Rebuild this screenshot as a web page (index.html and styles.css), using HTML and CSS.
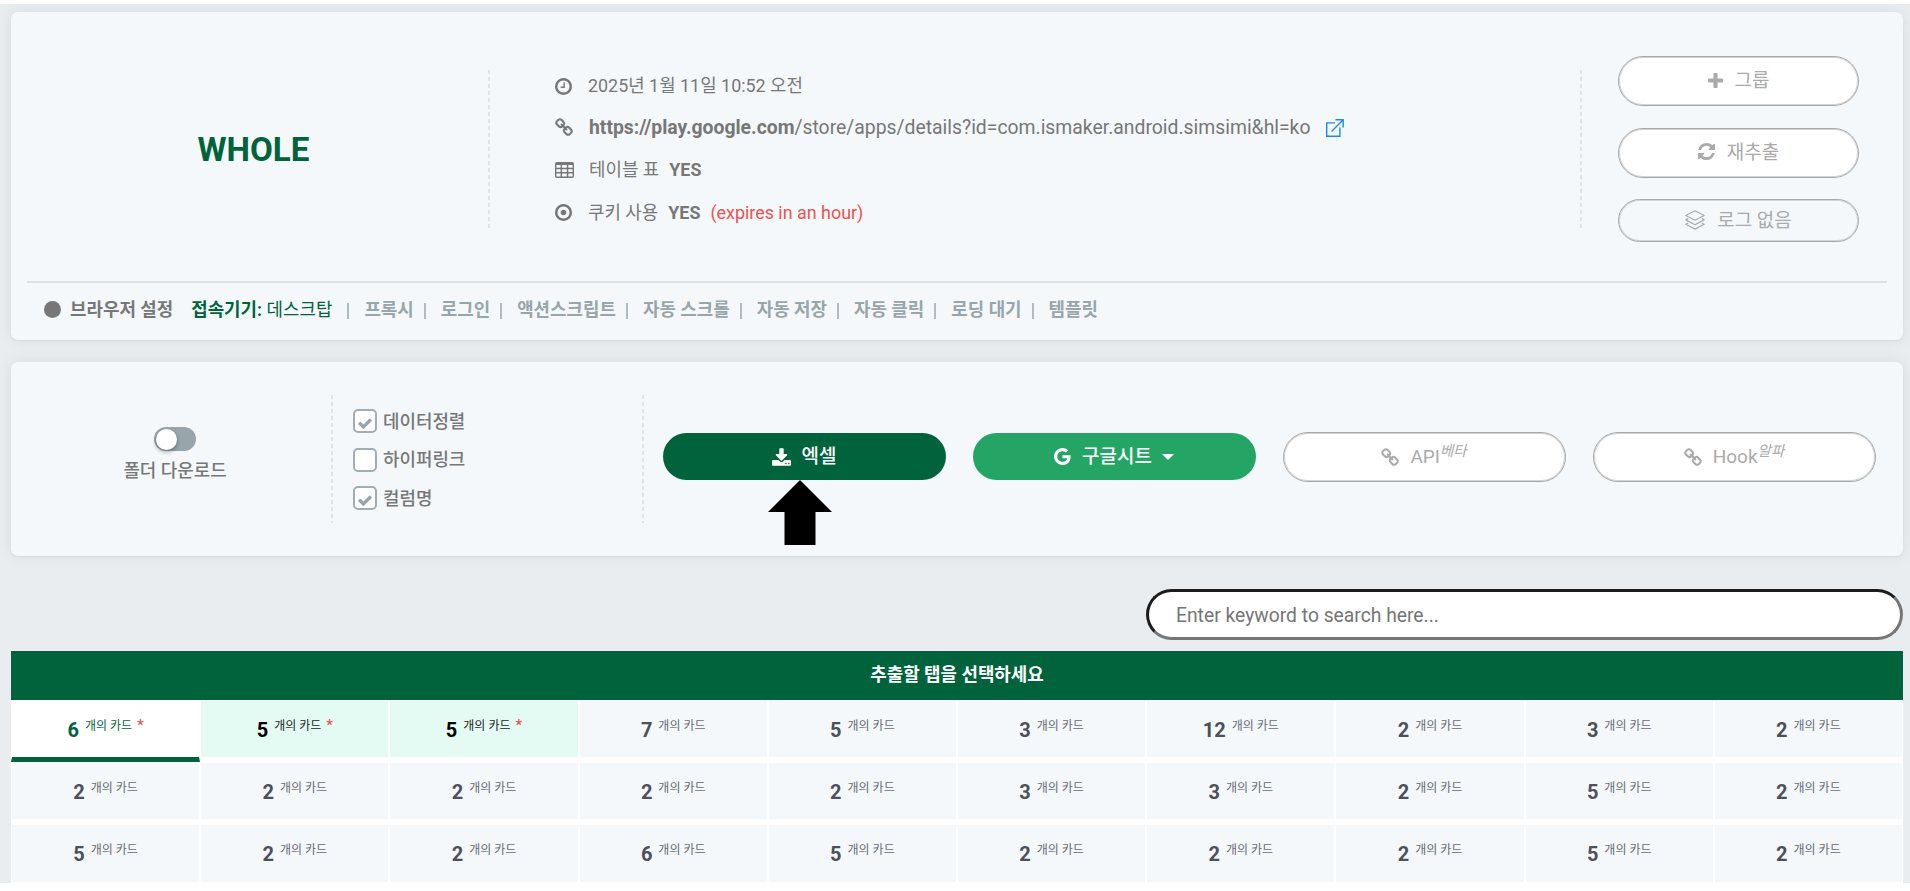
FILE: index.html
```html
<!DOCTYPE html>
<html lang="ko">
<head>
<meta charset="utf-8">
<title>WHOLE</title>
<link rel="stylesheet" href="styles.css">
</head>
<body>
<svg class="defs" width="0" height="0">
  <symbol id="clock" viewBox="128 128 1536 1536"><path d="M1024 544v448q0 14-9 23t-23 9h-320q-14 0-23-9t-9-23v-64q0-14 9-23t23-9h224v-352q0-14 9-23t23-9h64q14 0 23 9t9 23zm416 352q0-148-73-273t-198-198-273-73-273 73-198 198-73 273 73 273 198 198 273 73 273-73 198-198 73-273zm224 0q0 209-103 385.5t-279.5 279.5-385.5 103-385.5-103-279.5-279.5-103-385.5 103-385.5 279.5-279.5 385.5-103 385.5 103 279.5 279.5 103 385.5z"/></symbol>
  <symbol id="chain" viewBox="64 0 1664 1664"><path d="M1520 1216q0-40-28-68l-208-208q-28-28-68-28-42 0-72 32 3 3 19 18.5t21.5 21.5 15 19 13 25.5 3.5 27.5q0 40-28 68t-68 28q-15 0-27.5-3.5t-25.5-13-19-15-21.5-21.5-18.5-19q-33 31-33 73 0 40 28 68l206 207q27 27 68 27 40 0 68-26l147-146q28-28 28-67zm-703-705q0-40-28-68l-206-207q-28-28-68-28-39 0-68 27l-147 146q-28 28-28 67 0 40 28 68l208 208q27 27 68 27 42 0 72-31-3-3-19-18.5t-21.5-21.5-15-19-13-25.5-3.5-27.5q0-40 28-68t68-28q15 0 27.5 3.5t25.5 13 19 15 21.5 21.5 18.5 19q33-31 33-73zm895 705q0 120-85 203l-147 146q-83 83-203 83-121 0-204-85l-206-207q-83-83-83-203 0-123 88-209l-88-88q-86 88-208 88-120 0-204-84l-208-208q-84-84-84-204t85-203l147-146q83-83 203-83 121 0 204 85l206 207q83 83 83 203 0 123-88 209l88 88q86-88 208-88 120 0 204 84l208 208q84 84 84 204z"/></symbol>
  <symbol id="table" viewBox="0 0 19 16"><path fill-rule="evenodd" d="M1.8 0h15.4Q19 0 19 1.8v12.4Q19 16 17.200 16H1.800Q0 16 0 14.200V1.800Q0 0 1.800 0zM1.400 3v2.800h4.200V3zM7 3v2.800h4.800V3zM13.300 3v2.800h4.300V3zM1.400 7.200v2.800h4.200V7.200zM7 7.200v2.800h4.800V7.200zM13.300 7.200v2.800h4.300V7.200zM1.400 11.400v3.100h4.200v-3.100zM7 11.400v3.100h4.800v-3.100zM13.300 11.400v3.100h4.300v-3.100z"/></symbol>
  <symbol id="dot" viewBox="128 128 1536 1536"><path d="M1152 896q0 106-75 181t-181 75-181-75-75-181 75-181 181-75 181 75 75 181zm-256-544q-148 0-273 73t-198 198-73 273 73 273 198 198 273 73 273-73 198-198 73-273-73-273-198-198-273-73zm768 544q0 209-103 385.500t-279.500 279.500-385.500 103-385.500-103-279.500-279.500-103-385.500 103-385.500 279.500-279.500 385.500-103 385.500 103 279.500 279.500 103 385.500z"/></symbol>
  <symbol id="plus" viewBox="192 128 1408 1408"><path d="M1600 736v192q0 40-28 68t-68 28h-416v416q0 40-28 68t-68 28h-192q-40 0-68-28t-28-68v-416h-416q-40 0-68-28t-28-68v-192q0-40 28-68t68-28h416v-416q0-40 28-68t68-28h192q40 0 68 28t28 68v416h416q40 0 68 28t28 68z"/></symbol>
  <symbol id="refresh" viewBox="128 128 1536 1536"><path d="M1639 1056q0 5-1 7-64 268-268 434.500t-478 166.500q-146 0-282.500-55t-243.500-157l-129 129q-19 19-45 19t-45-19-19-45v-448q0-26 19-45t45-19h448q26 0 45 19t19 45-19 45l-137 137q71 66 161 102t187 36q134 0 250-65t186-179q11-17 53-117 8-23 30-23h192q13 0 22.500 9.500t9.500 22.500zm25-800v448q0 26-19 45t-45 19h-448q-26 0-45-19t-19-45 19-45l138-138q-148-137-349-137-134 0-250 65t-186 179q-11 17-53 117-8 23-30 23h-199q-13 0-22.500-9.500t-9.500-22.500v-7q65-268 270-434.500t480-166.500q146 0 284 55.500t245 156.500l130-129q19-19 45-19t45 19 19 45z"/></symbol>
  <symbol id="download" viewBox="64 0 1664 1536"><path d="M1344 1344q0-26-19-45t-45-19-45 19-19 45 19 45 45 19 45-19 19-45zm256 0q0-26-19-45t-45-19-45 19-19 45 19 45 45 19 45-19 19-45zm128-224v320q0 40-28 68t-68 28h-1472q-40 0-68-28t-28-68v-320q0-40 28-68t68-28h465l135 136q58 56 136 56t136-56l136-136h464q40 0 68 28t28 68zm-325-569q17 41-14 70l-448 448q-18 19-45 19t-45-19l-448-448q-31-29-14-70 17-39 59-39h256v-448q0-26 19-45t45-19h256q26 0 45 19t19 45v448h256q42 0 59 39z"/></symbol>
  <symbol id="google" viewBox="128 128 1536 1536"><path d="M896 786h725q12 67 12 128 0 217-91 387.500t-259.500 266.500-386.500 96q-157 0-299-60.500t-245-163.500-163.500-245-60.500-299 60.500-299 163.500-245 245-163.500 299-60.500q300 0 515 201l-209 201q-123-119-306-119-129 0-238.500 65t-173.500 176.500-64 243.500 64 243.500 173.500 176.500 238.500 65q87 0 160-24t120-60 82-82 51.500-87 22.500-78h-436v-264z"/></symbol>
  <symbol id="check" viewBox="121 270 1550 1252"><path d="M1671 566q0 40-28 68l-724 724-136 136q-28 28-68 28t-68-28l-136-136-362-362q-28-28-28-68t28-68l136-136q28-28 68-28t68 28l294 295 656-657q28-28 68-28t68 28l136 136q28 28 28 68z"/></symbol>
  <symbol id="layers" viewBox="0 0 20 20"><path fill="none" stroke="currentColor" stroke-width="1.200" stroke-linejoin="round" d="M10 .8 19.200 5.500 10 10.200.8 5.500zM3.200 8.600.8 9.900 10 14.700l9.200-4.800-2.400-1.300M3.200 13 .8 14.200 10 19.100l9.200-4.900L16.800 13"/></symbol>
  <symbol id="external" viewBox="0 0 18 18"><path fill="none" stroke="currentColor" stroke-width="1.400" d="M9 3.900H.7v13.300h13.200V8.500M9.500.8h7.700v7.700M17 1 5.500 12.500"/></symbol>
</svg>

<main class="page">
  <section class="card summary">
    <div class="summary-top">
      <h1 class="title">WHOLE</h1>
      <div class="dash"></div>
      <ul class="info">
        <li><svg class="i17"><use href="#clock"/></svg><span class="when">2025년 1월 11일 10:52 오전</span></li>
        <li><svg class="i18"><use href="#chain"/></svg><span class="url"><b>https://play.google.com</b>/store/apps/details?id=com.ismaker.android.simsimi&amp;hl=ko</span><svg class="ext"><use href="#external"/></svg></li>
        <li><svg class="itable"><use href="#table"/></svg><span>테이블 표</span><b class="yes">YES</b></li>
        <li><svg class="i17"><use href="#dot"/></svg><span>쿠키 사용</span><b class="yes">YES</b><span class="expires">(expires in an hour)</span></li>
      </ul>
      <div class="dash"></div>
      <div class="actions">
        <button class="pill group"><svg><use href="#plus"/></svg><span>그룹</span></button>
        <button class="pill again"><svg><use href="#refresh"/></svg><span>재추출</span></button>
        <button class="pill log"><svg><use href="#layers"/></svg><span>로그 없음</span></button>
      </div>
    </div>
    <div class="settings">
      <i class="bullet"></i><b class="browser">브라우저 설정</b>
      <span class="device"><b>접속기기:</b> 데스크탑</span>
      <i class="bar first"></i><b>프록시</b>
      <i class="bar"></i><b>로그인</b>
      <i class="bar"></i><b>액션스크립트</b>
      <i class="bar"></i><b>자동 스크롤</b>
      <i class="bar"></i><b>자동 저장</b>
      <i class="bar"></i><b>자동 클릭</b>
      <i class="bar"></i><b>로딩 대기</b>
      <i class="bar"></i><b>템플릿</b>
    </div>
  </section>

  <section class="card export">
    <div class="folder"><span class="toggle"><i></i></span><span class="med">폴더 다운로드</span></div>
    <div class="dash"></div>
    <div class="options">
      <label><span class="box"><svg><use href="#check"/></svg></span><span class="med">데이터정렬</span></label>
      <label><span class="box"></span><span class="med">하이퍼링크</span></label>
      <label><span class="box"><svg><use href="#check"/></svg></span><span class="med">컬럼명</span></label>
    </div>
    <div class="dash"></div>
    <div class="buttons">
      <button class="pill excel"><svg><use href="#download"/></svg><span>엑셀</span>
        <svg class="pointer" viewBox="0 0 64 65"><path d="M32 0 64 32H47.500V65h-31V32H0z"/></svg></button>
      <button class="pill sheet"><svg><use href="#google"/></svg><span>구글시트</span><i class="caret"></i></button>
      <button class="pill hook"><svg><use href="#chain"/></svg><span>API<sup>베타</sup></span></button>
      <button class="pill hook"><svg><use href="#chain"/></svg><span>Hook<sup>알파</sup></span></button>
    </div>
  </section>

  <input class="search" type="text" placeholder="Enter keyword to search here...">

  <section class="tabs">
    <h2>추출할 탭을 선택하세요</h2>
    <div class="grid">
      <div class="cell active"><b>6</b><span>개의 카드</span><em>*</em></div>
      <div class="cell hint"><b>5</b><span>개의 카드</span><em>*</em></div>
      <div class="cell hint"><b>5</b><span>개의 카드</span><em>*</em></div>
      <div class="cell"><b>7</b><span>개의 카드</span></div>
      <div class="cell"><b>5</b><span>개의 카드</span></div>
      <div class="cell"><b>3</b><span>개의 카드</span></div>
      <div class="cell"><b>12</b><span>개의 카드</span></div>
      <div class="cell"><b>2</b><span>개의 카드</span></div>
      <div class="cell"><b>3</b><span>개의 카드</span></div>
      <div class="cell"><b>2</b><span>개의 카드</span></div>
      <div class="cell"><b>2</b><span>개의 카드</span></div>
      <div class="cell"><b>2</b><span>개의 카드</span></div>
      <div class="cell"><b>2</b><span>개의 카드</span></div>
      <div class="cell"><b>2</b><span>개의 카드</span></div>
      <div class="cell"><b>2</b><span>개의 카드</span></div>
      <div class="cell"><b>3</b><span>개의 카드</span></div>
      <div class="cell"><b>3</b><span>개의 카드</span></div>
      <div class="cell"><b>2</b><span>개의 카드</span></div>
      <div class="cell"><b>5</b><span>개의 카드</span></div>
      <div class="cell"><b>2</b><span>개의 카드</span></div>
      <div class="cell"><b>5</b><span>개의 카드</span></div>
      <div class="cell"><b>2</b><span>개의 카드</span></div>
      <div class="cell"><b>2</b><span>개의 카드</span></div>
      <div class="cell"><b>6</b><span>개의 카드</span></div>
      <div class="cell"><b>5</b><span>개의 카드</span></div>
      <div class="cell"><b>2</b><span>개의 카드</span></div>
      <div class="cell"><b>2</b><span>개의 카드</span></div>
      <div class="cell"><b>2</b><span>개의 카드</span></div>
      <div class="cell"><b>5</b><span>개의 카드</span></div>
      <div class="cell"><b>2</b><span>개의 카드</span></div>
    </div>
  </section>
</main>
</body>
</html>
```
FILE: styles.css
```css
* { box-sizing: border-box; }
html, body { margin: 0; background: #fff; }
body {
  height: 891px;
  padding-top: 4px;
  overflow: hidden;
  font-family: Roboto, "Noto Sans CJK KR", sans-serif;
  font-size: 17.9px;
  line-height: 24px;
  color: #777;
}
svg { fill: currentColor; flex: none; display: block; }
.defs { position: absolute; }
.page {
  height: 879px;
  padding: 8px 7px 0 11px;
  background: #e9edf0;
  display: flex;
  flex-direction: column;
  overflow: hidden;
}
.page > * { flex: none; }
.card {
  background: #f4f8fb;
  border-radius: 7px;
  box-shadow: 0 0 14px rgba(60, 75, 85, .1), 0 1px 2px rgba(60, 75, 85, .06);
}
.dash {
  width: 2px;
  flex: none;
  background: repeating-linear-gradient(#dfe4e7 0 4px, transparent 4px 7px);
}

.summary { height: 328px; }
.summary-top { height: 271px; display: flex; margin: 0 16px; border-bottom: 2px solid #dbe1e4; }
.summary-top .dash { height: 158px; margin-top: 58px; }
.title { width: 461px; margin: 0; padding: 118px 8px 0 0; text-align: center; font-size: 33.2px; line-height: 40px; color: #00633c; }
.info { list-style: none; margin: 0; padding: 53px 0 0 65px; width: 1090px; }
.info li { display: flex; align-items: center; height: 42.200px; white-space: nowrap; }
.i17 { width: 17px; height: 17px; margin-right: 16px; }
.i18 { width: 18px; height: 18px; margin-right: 16px; position: relative; top: -1px; }
.itable { width: 19px; height: 16px; margin-right: 15px; }
.url { font-size: 19.36px; }
.ext { width: 18px; height: 18px; margin-left: 16px; color: #1a87ff; }
.yes { margin-left: 10px; }
.expires { margin-left: 10px; color: #f0504d; }
.actions { padding: 44px 0 0 36px; }

.pill {
  display: flex;
  align-items: center;
  justify-content: center;
  gap: 12px;
  padding: 0;
  border: 1px solid #a8a8a8;
  box-shadow: inset 0 0 0 1px #d4d4d4;
  border-radius: 25px;
  background: #fff;
  color: #aaa;
  font: inherit;
  font-size: 19px;
}
.actions .pill { width: 241px; height: 50px; margin-bottom: 21.500px; }
.actions .pill svg { position: relative; top: -1px; }
.group svg { width: 15px; height: 15px; }
.again svg { width: 17px; height: 17px; }
.log svg { width: 20px; height: 20px; }
.actions .log { height: 43px; background: none; }

.settings { display: flex; align-items: center; height: 53px; padding-left: 33px; color: #98a5ab; white-space: nowrap; }
.bullet { width: 17px; height: 17px; border-radius: 50%; background: #777; margin-right: 9px; }
.browser { color: #777; margin-right: 18px; }
.device { color: #00633c; }
.bar { width: 2px; height: 16px; margin: 2px 15px 0 10px; background: #b0babf; }
.bar.first { margin-left: 15px; }

.export { height: 194px; margin-top: 22px; display: flex; }
.export > .dash { height: 128px; margin-top: 33px; }
.med { font-weight: 500; padding-top: 1px; }
.folder { width: 320px; padding: 65px 0 0 8px; display: flex; flex-direction: column; align-items: center; }
.toggle { width: 42px; height: 24px; border-radius: 12px; background: #98a5ab; padding: 1.500px; margin-bottom: 7px; }
.toggle i { display: block; width: 21px; height: 21px; border-radius: 50%; background: #fff; box-shadow: 0 2px 4px rgba(0, 0, 0, .35); }
.options { width: 309px; padding: 47px 0 0 20px; }
.options label { display: flex; align-items: center; gap: 6px; height: 24px; margin-bottom: 14.700px; }
.box { width: 24px; height: 24px; border: 2px solid #a0adb3; border-radius: 5px; background: #fff; padding: 7px 0 0 3px; color: #98a5ab; }
.box svg { width: 14px; height: 11px; }
.buttons { display: flex; align-items: center; gap: 27px; padding: 0 0 5px 19px; height: 194px; }
.buttons .pill { width: 283px; height: 50px; gap: 11px; padding-right: 1px; position: relative; }
.buttons .excel, .buttons .sheet { height: 47px; border: 0; box-shadow: none; color: #fff; font-weight: 500; }
.buttons .excel { background: #00633c; }
.buttons .sheet { background: #24a566; }
.excel svg { width: 19px; height: 18px; }
.sheet svg { width: 17px; height: 17px; }
.hook svg { width: 18px; height: 18px; }
.excel .pointer { position: absolute; left: 105px; top: 47px; width: 64px; height: 65px; fill: #000; }
.caret { border: 6px solid transparent; border-top-color: #fff; border-bottom: 0; margin-left: -1px; }
.hook sup { font-size: 14.500px; font-style: italic; line-height: 0; }

.search {
  width: 757px;
  height: 51px;
  margin: 33px 0 0;
  align-self: flex-end;
  border: 3px solid;
  border-color: #1c1c1c #767676 #767676 #1c1c1c;
  border-radius: 26px;
  padding: 1px 27px 0;
  font: inherit;
  font-size: 19.3px;
  background: #fff;
}
.search::placeholder { color: #757575; }

.tabs { margin-top: 11px; }
.tabs h2 { margin: 0; height: 49px; line-height: 48px; text-align: center; font-size: 17.900px; color: #fff; background: #00633c; }
.grid { display: grid; grid-template-columns: repeat(10, 1fr); background: #fff; }
.cell {
  height: 62.200px;
  display: flex;
  justify-content: center;
  padding-top: 17px;
  border: solid #fff;
  border-width: 1px 1.500px 5px;
  background: #f4f8fb;
  color: #666b75;
}
.cell b { font-size: 20px; color: #4b505c; line-height: 25px; }
.cell span { margin-left: 6px; font-size: 12px; line-height: 16px; }
.cell em { margin-left: 5px; font-style: normal; font-size: 15px; font-weight: 500; line-height: 15px; color: #f0504d; }
.cell.active { background: #fff; border-bottom-color: #00633c; color: #00633c; }
.cell.hint { background: #e3fbf3; color: #222; }
.cell.active b { color: #00633c; }
.cell.hint b { color: #000; }
```
